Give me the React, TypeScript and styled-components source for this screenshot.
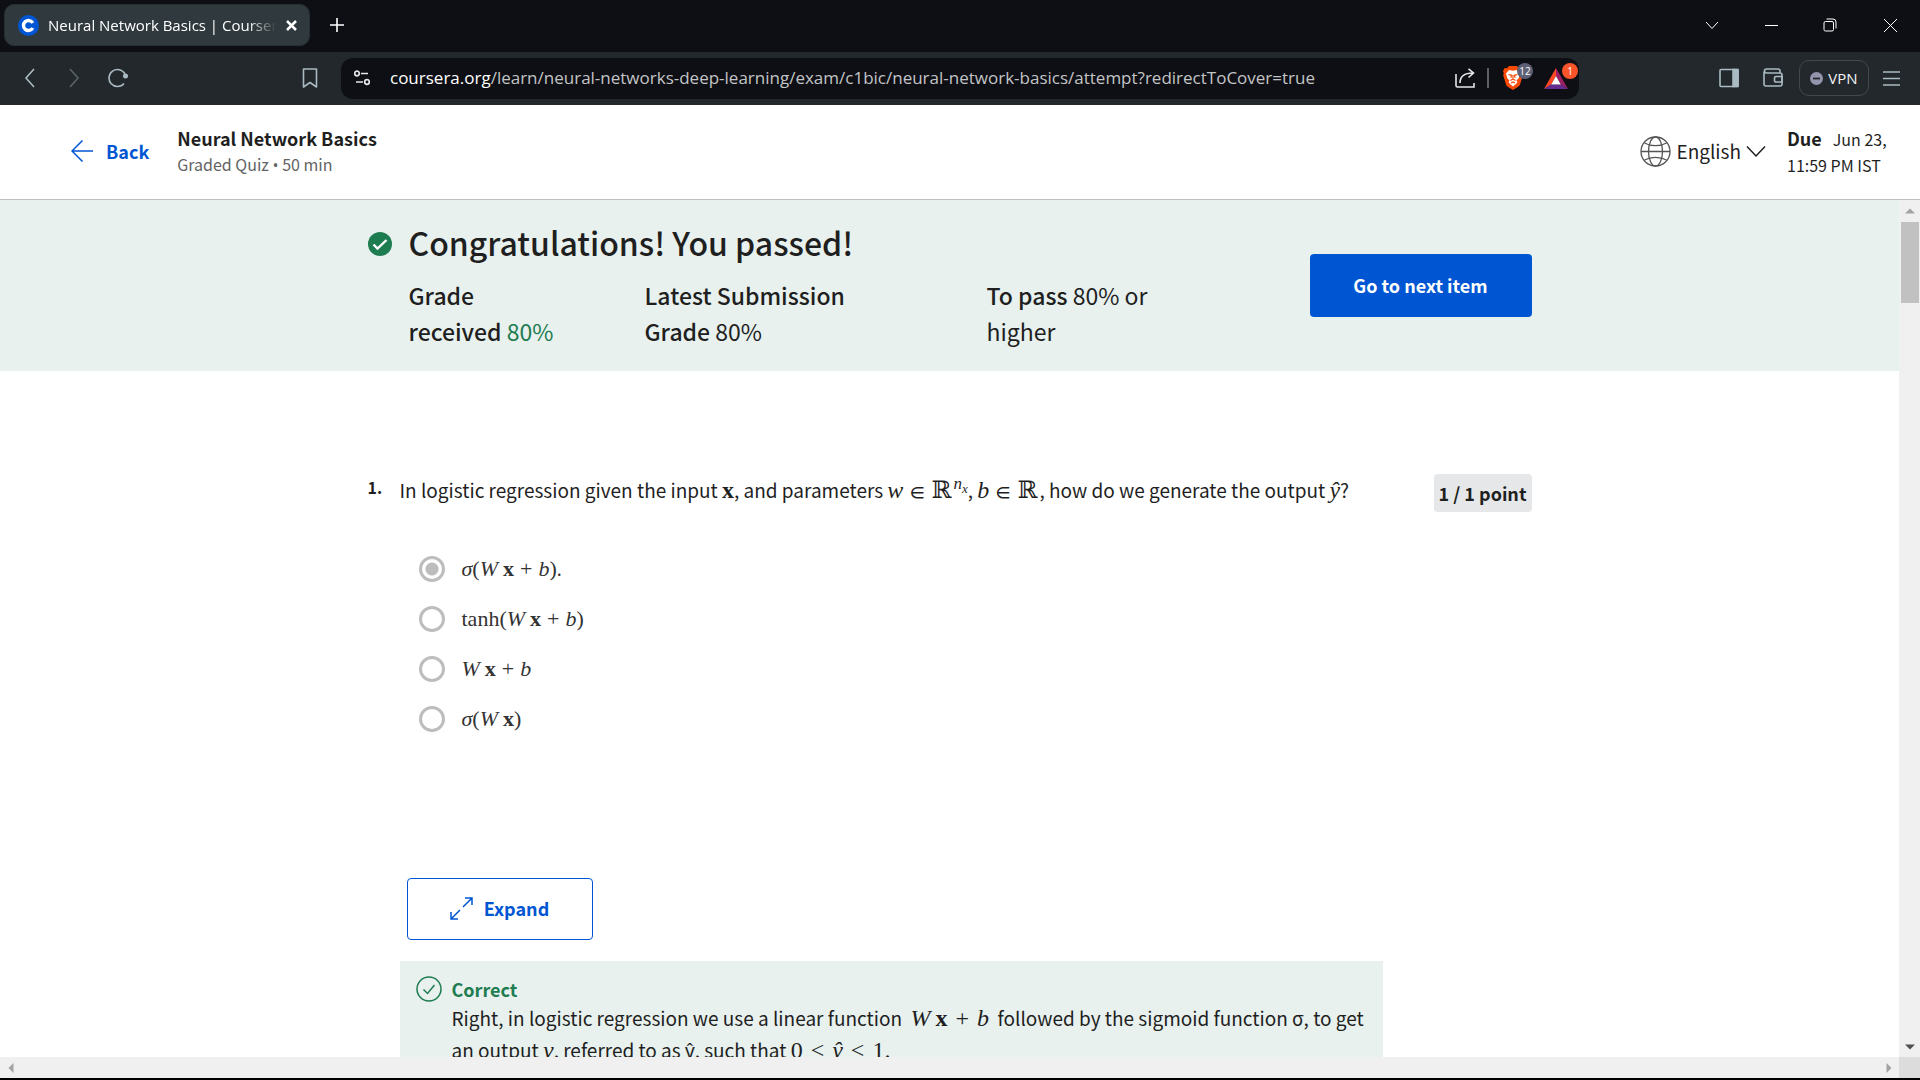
import React from "react";
import styled, { createGlobalStyle } from "styled-components";

const sans = `"Noto Sans CJK SC", "Noto Sans", sans-serif`;
const ui = `"Open Sans", "Noto Sans", sans-serif`;
const serif = `"Liberation Serif", "DejaVu Math TeX Gyre", "DejaVu Serif", serif`;

const Global = createGlobalStyle`
  *, *::before, *::after { box-sizing: border-box; }
  body { margin: 0; background: #000; overflow: hidden; }
  h1, h2, p, fieldset { margin: 0; padding: 0; border: 0; }
  button { font: inherit; color: inherit; background: none; border: 0; padding: 0; cursor: pointer; }
  svg { display: block; flex: none; }
`;

const Window = styled.div`
  height: 100vh;
  display: flex;
  flex-direction: column;
  border-bottom: 2px solid #000;
  background: #fff;
  color: #1f1f1f;
  font-family: ${sans};
  font-size: 18px;
  line-height: 32px;
`;

/* ---------- browser chrome ---------- */

const TabStrip = styled.div`
  flex: none;
  height: 52px;
  display: flex;
  align-items: center;
  padding: 0 0 2px 4px;
  background: #0e0f14;
  color: #fff;
  font-family: ${ui};
`;

const Tab = styled.div`
  width: 306px;
  height: 42px;
  display: flex;
  align-items: center;
  padding: 0 12px 0 13px;
  border: 1px solid #272e32;
  border-radius: 10px;
  background: #30393d;
`;

const TabTitle = styled.span`
  flex: 1;
  min-width: 0;
  margin: 0 10px 0 9px;
  overflow: hidden;
  white-space: nowrap;
  font-size: 15px;
  line-height: 24px;
  -webkit-mask-image: linear-gradient(to right, #000 88%, transparent);
  mask-image: linear-gradient(to right, #000 88%, transparent);
`;

const ChromeButton = styled.button<{ $w?: number; $dim?: boolean }>`
  width: ${(p) => p.$w ?? 36}px;
  height: 36px;
  display: flex;
  flex: none;
  align-items: center;
  justify-content: center;
  opacity: ${(p) => (p.$dim ? 0.4 : 1)};
`;

const WindowControls = styled.div`
  margin-left: auto;
  display: flex;
`;

const Toolbar = styled.div`
  flex: none;
  height: 53px;
  display: flex;
  align-items: center;
  padding: 0 15px 1px 12px;
  background: #23282c;
  color: #a9bac2;
  font-family: ${ui};
`;

const NavGroup = styled.div`
  display: flex;
  gap: 8px;
`;

const BookmarkSlot = styled.div`
  margin-left: 156px;
  margin-right: 13px;
`;

const AddressBar = styled.div`
  flex: 0 1 1238px;
  min-width: 0;
  height: 41px;
  display: flex;
  align-items: center;
  padding: 0 1px 0 3px;
  border-radius: 12px;
  background: #0e0f14;
  color: #e4e6e8;
`;

const Address = styled.span`
  flex: 1;
  min-width: 0;
  margin-left: 10px;
  overflow: hidden;
  white-space: nowrap;
  font-size: 17px;
  line-height: 28px;
  color: #c3c4c6;
`;

const Host = styled.span`
  color: #fff;
`;

const Divider = styled.span`
  width: 2px;
  height: 20px;
  margin: 0 4px;
  background: #5c5e63;
`;

const BadgeButton = styled(ChromeButton)`
  position: relative;
`;

const Badge = styled.span<{ $alert?: boolean }>`
  position: absolute;
  top: 3px;
  right: 0;
  width: 16px;
  height: 16px;
  border-radius: 8px;
  background: ${(p) => (p.$alert ? "#fb542b" : "#5e6175")};
  color: #fff;
  font-size: 10px;
  line-height: 16px;
  text-align: center;
`;

const ToolbarEnd = styled.div`
  margin-left: auto;
  display: flex;
  align-items: center;
  gap: 8px;
`;

const VpnButton = styled.button`
  height: 36px;
  width: 70px;
  display: flex;
  align-items: center;
  justify-content: center;
  gap: 5px;
  border: 1px solid #42494e;
  border-radius: 10px;
  color: #f0f2f4;
  font-size: 15px;
  line-height: 20px;
`;

/* ---------- course header ---------- */

const Header = styled.header`
  flex: none;
  height: 95px;
  display: flex;
  align-items: center;
  padding: 0 32px 2px 71px;
  border-bottom: 1px solid #bdbdbd;
`;

const BackLink = styled.a`
  display: flex;
  align-items: center;
  gap: 13px;
  margin-right: 28px;
  color: #0056d2;
  font-weight: 700;
  line-height: 30px;
  text-decoration: none;
`;

const CourseTitle = styled.h2`
  font-size: 18px;
  font-weight: 700;
  line-height: 26px;
`;

const CourseMeta = styled.p`
  font-size: 16px;
  line-height: 26px;
  color: #636363;
`;

const Bullet = styled.span`
  font-family: ${ui};
`;

const HeaderEnd = styled.div`
  margin-left: auto;
  display: flex;
  align-items: center;
`;

const LanguageButton = styled.button`
  display: flex;
  align-items: center;
  gap: 5px;
  margin-right: 21px;
  font-size: 19px;
`;

const DueDate = styled.p`
  width: 101px;
  white-space: nowrap;
  font-size: 16px;
  line-height: 26px;
`;

const DueLabel = styled.strong`
  margin-right: 11px;
  font-size: 18px;
  font-weight: 700;
`;

/* ---------- scrolling page ---------- */

const Viewport = styled.div`
  flex: 1;
  min-height: 0;
  display: grid;
  grid-template-columns: minmax(0, 1fr) 21px;
  grid-template-rows: minmax(0, 1fr) 21px;
`;

const Page = styled.main`
  overflow: hidden;
`;

const ScrollTrack = styled.div<{ $horizontal?: boolean }>`
  display: flex;
  flex-direction: ${(p) => (p.$horizontal ? "row" : "column")};
  align-items: center;
  justify-content: space-between;
  background: #f0f0f0;
`;

const ScrollArrow = styled.span`
  width: 21px;
  height: 21px;
  display: flex;
  align-items: center;
  justify-content: center;
`;

const ScrollThumb = styled.span`
  width: 18px;
  height: 81px;
  margin: 1px 0 auto;
  background: #c1c1c1;
`;

const ScrollCorner = styled.div`
  background: #dcdcdc;
`;

const Container = styled.div`
  max-width: 1164px;
  margin: 0 auto;
`;

const Banner = styled.section`
  padding: 22px 0;
  background: #e8f1ee;
`;

const BannerRow = styled(Container)`
  display: flex;
  align-items: flex-start;
`;

const BannerIcon = styled.div`
  flex: none;
  width: 41px;
  padding-top: 10px;
`;

const BannerTitle = styled.h1`
  font-size: 32px;
  font-weight: 500;
  line-height: 40px;
`;

const Grades = styled.div`
  display: grid;
  grid-template-columns: 156px 262px 218px;
  column-gap: 80px;
  margin-top: 15px;
  font-size: 23px;
  line-height: 36px;
`;

const Strong = styled.strong`
  font-weight: 500;
`;

const Passed = styled.span`
  color: #1d7c50;
`;

const NextButton = styled.button`
  align-self: center;
  width: 222px;
  height: 63px;
  margin-left: auto;
  padding-bottom: 2px;
  border-radius: 4px;
  background: #0056d2;
  color: #fff;
  font-weight: 700;
`;

const Question = styled(Container)`
  display: grid;
  grid-template-columns: 32px minmax(0, 983px) 1fr;
  align-items: start;
  padding-top: 103px;
`;

const QuestionNumber = styled.span`
  font-weight: 700;
  font-size: 16px;
  line-height: 26px;
`;

const Prose = styled.p`
  font-size: 19px;
`;

const Points = styled.span`
  justify-self: end;
  padding: 0 5px;
  border-radius: 4px;
  background: #e5e7e8;
  font-weight: 700;
  line-height: 38px;
`;

const Options = styled.fieldset`
  padding: 38px 0 0 19px;
`;

const Option = styled.label`
  height: 50px;
  display: flex;
  align-items: center;
  gap: 17px;
  color: #333;
`;

const OptionText = styled.span`
  padding-bottom: 2px;
`;

const Radio = styled.input`
  appearance: none;
  width: 26px;
  height: 26px;
  margin: 0;
  border: 3px solid #bdbdbd;
  border-radius: 50%;
  background: #fff;
  &:checked {
    background: radial-gradient(circle, #bdbdbd 6px, #fff 7px);
  }
`;

const ExpandButton = styled.button`
  width: 186px;
  height: 62px;
  display: flex;
  align-items: center;
  justify-content: center;
  gap: 11px;
  margin: 134px 0 21px 7px;
  padding-bottom: 2px;
  border: 1px solid #0056d2;
  border-radius: 4px;
  color: #0056d2;
  font-weight: 700;
`;

const Feedback = styled.section`
  display: flex;
  gap: 10px;
  padding: 15px 16px 24px;
  background: #e8f1ee;
`;

const FeedbackIcon = styled.div`
  color: #1d7c50;
`;

const FeedbackTitle = styled.h2`
  font-size: 18px;
  font-weight: 700;
  line-height: 26px;
  color: #1d7c50;
`;

/* ---------- inline formulas ---------- */

const Formula = styled.span<{ $small?: boolean }>`
  font-family: ${serif};
  font-size: ${(p) => (p.$small ? 22 : 24)}px;
  line-height: 1;
  white-space: nowrap;
`;

const Sup = styled.sup`
  font-size: 17px;
  line-height: 0;
`;

const Sub = styled.sub`
  font-size: 13px;
  line-height: 0;
`;

const Op = styled.span<{ $gap?: number }>`
  margin: 0 ${(p) => p.$gap ?? 6}px;
`;

const Member = styled.span`
  margin: 0 6px;
  font-size: 19px;
`;

const Bold = styled.b`
  margin-left: 5px;
`;

const Wxb = ({ gap }: { gap?: number }) => (
  <>
    <i>W</i>
    <Bold>x</Bold>
    <Op $gap={gap}>+</Op>
    <i>b</i>
  </>
);

/* ---------- icons ---------- */

type StrokeProps = { size: number; w?: number; children: React.ReactNode };
const Stroke = ({ size, w = 2, children }: StrokeProps) => (
  <svg width={size} height={size} viewBox={`0 0 ${size} ${size}`} fill="none" stroke="currentColor" strokeWidth={w} aria-hidden="true">
    {children}
  </svg>
);

const Favicon = () => (
  <svg width="21" height="21" viewBox="0 0 21 21" aria-hidden="true">
    <circle cx="10.500" cy="10.500" r="10.500" fill="#0056d2" />
    <path d="M14.800 8A5 5 0 1 0 14.800 13" fill="none" stroke="#fff" strokeWidth="3.400" />
  </svg>
);

const BraveLion = () => (
  <svg width="20" height="24" viewBox="0 0 20 24" aria-hidden="true">
    <path d="M6 0h8l2 2.200 2.300-.2L20 5l-.8 2.200.6 2L17 18.500c-.6 1.800-2.500 2.900-7 5.500-4.500-2.600-6.400-3.700-7-5.500L.2 9.200l.6-2L0 5l1.700-3 2.300.2z" fill="#fb4a04" />
    <path d="M6 4l4 .8L14 4l3 3.600-1.300 4.600-2.200 2.300 1 1.500-1.500 2L10 20.500 7 18l-1.500-2 1-1.500-2.200-2.300L3 7.600z" fill="#fff" />
    <path d="M5.500 8.500l3 .8-.6 2.500M14.500 8.500l-3 .8.6 2.500M7.500 14.500L10 13l2.500 1.500M10 9v4M8 17l2-1 2 1" fill="none" stroke="#fb4a04" strokeWidth="1.200" />
  </svg>
);

const BatTriangle = () => (
  <svg width="24" height="21" viewBox="0 0 24 21" aria-hidden="true">
    <path d="M12 0L0 21l7.200-4.600L12 8z" fill="#ff4724" />
    <path d="M12 0v8l4.800 8.400L24 21z" fill="#9e1f63" />
    <path d="M0 21h24l-7.200-4.600H7.200z" fill="#662d91" />
    <path d="M12 8l4.800 8.400H7.200z" fill="#fff" />
  </svg>
);

const Globe = () => (
  <svg width="31" height="31" viewBox="0 0 31 31" fill="none" stroke="#555" strokeWidth="1.300" aria-hidden="true">
    <circle cx="15.500" cy="15.500" r="14.500" />
    <ellipse cx="15.500" cy="15.500" rx="7" ry="14.500" />
    <path d="M1 15.500h29M4.500 7c6 3.500 16 3.500 22 0M4.500 24c6-3.500 16-3.500 22 0" />
  </svg>
);

const Arrow = ({ turn, dark }: { turn: number; dark?: boolean }) => (
  <svg width="10" height="10" viewBox="0 0 10 10" aria-hidden="true">
    <path d="M0 7.500h10L5 2.500z" fill={dark ? "#505050" : "#a3a3a3"} transform={`rotate(${turn} 5 5)`} />
  </svg>
);

/* ---------- content ---------- */

const options: { id: string; formula: React.ReactNode; tail?: string }[] = [
  { id: "a", formula: <><i>σ</i>(<Wxb />)</>, tail: "." },
  { id: "b", formula: <>tanh(<Wxb />)</> },
  { id: "c", formula: <Wxb /> },
  { id: "d", formula: <><i>σ</i>(<i>W</i><Bold>x</Bold>)</> },
];

const BrowserTabs = () => (
  <TabStrip>
    <Tab>
      <Favicon />
      <TabTitle>Neural Network Basics | Coursera</TabTitle>
      <button aria-label="Close tab">
        <Stroke size={11} w={2.500}><path d="M1 1l9 9M10 1l-9 9" /></Stroke>
      </button>
    </Tab>
    <ChromeButton $w={54} aria-label="New tab">
      <Stroke size={14} w={1.600}><path d="M7 0v14M0 7h14" /></Stroke>
    </ChromeButton>
    <WindowControls>
      <ChromeButton $w={60} aria-label="Search tabs">
        <Stroke size={14} w={1}><path d="M1 4l6 6.500L13 4" /></Stroke>
      </ChromeButton>
      <ChromeButton $w={58} aria-label="Minimize">
        <Stroke size={13} w={1}><path d="M0 6.500h13" /></Stroke>
      </ChromeButton>
      <ChromeButton $w={60} aria-label="Restore">
        <Stroke size={14} w={1}>
          <rect x="1" y="3.500" width="9.500" height="9.500" rx="1.500" />
          <path d="M3.500 1h6.500a3 3 0 0 1 3 3v6.500" />
        </Stroke>
      </ChromeButton>
      <ChromeButton $w={60} aria-label="Close">
        <Stroke size={13} w={1}><path d="M0 0l13 13M13 0L0 13" /></Stroke>
      </ChromeButton>
    </WindowControls>
  </TabStrip>
);

const BrowserToolbar = () => (
  <Toolbar>
    <NavGroup>
      <ChromeButton aria-label="Back">
        <Stroke size={20} w={1.600}><path d="M14 1L6 10l8 9" /></Stroke>
      </ChromeButton>
      <ChromeButton $dim aria-label="Forward">
        <Stroke size={20} w={1.600}><path d="M6 1l8 9-8 9" /></Stroke>
      </ChromeButton>
      <ChromeButton aria-label="Reload">
        <Stroke size={20} w={1.600}>
          <path d="M16 15.500A8.500 8.500 0 1 1 17 6" />
          <circle cx="17.500" cy="8" r="2.500" fill="currentColor" stroke="none" />
        </Stroke>
      </ChromeButton>
    </NavGroup>
    <BookmarkSlot>
      <ChromeButton aria-label="Bookmark this page">
        <Stroke size={20} w={1.600}><path d="M3.500 1h13v18L10 14.500 3.500 19z" strokeLinejoin="round" /></Stroke>
      </ChromeButton>
    </BookmarkSlot>
    <AddressBar>
      <ChromeButton aria-label="Site information">
        <Stroke size={16} w={1.700}>
          <circle cx="3" cy="3.500" r="2.300" />
          <path d="M7 3.500h7M2 12h7" />
          <circle cx="13" cy="12" r="2.300" />
        </Stroke>
      </ChromeButton>
      <Address>
        <Host>coursera.org</Host>/learn/neural-networks-deep-learning/exam/c1bic/neural-network-basics/attempt?redirectToCover=true
      </Address>
      <ChromeButton aria-label="Share">
        <Stroke size={20} w={1.600}>
          <path d="M1 6v11.500a1.500 1.500 0 0 0 1.500 1.500H19v-4" />
          <path d="M5 15c0-6 4-10 13-10M13.500 .8L18.500 5l-5 4.500" />
        </Stroke>
      </ChromeButton>
      <Divider />
      <BadgeButton $w={40} aria-label="Brave Shields">
        <BraveLion />
        <Badge>12</Badge>
      </BadgeButton>
      <BadgeButton $w={45} aria-label="Brave Rewards">
        <BatTriangle />
        <Badge $alert>1</Badge>
      </BadgeButton>
    </AddressBar>
    <ToolbarEnd>
      <ChromeButton aria-label="Sidebar">
        <Stroke size={20} w={1.600}>
          <rect x="1" y="1.500" width="18" height="17" rx="1" />
          <path d="M14 1.500h5v17h-5z" fill="currentColor" />
        </Stroke>
      </ChromeButton>
      <ChromeButton aria-label="Wallet">
        <Stroke size={20} w={1.600}>
          <path d="M1 3.500v12.500a2 2 0 0 0 2 2h14a2 2 0 0 0 2-2V7a2 2 0 0 0-2-2H3.500a2 2 0 0 1 0-4H15a2 2 0 0 1 2 2v2" />
          <path d="M19 8.500h-6a1.500 1.500 0 0 0-1.500 1.500v2.500A1.500 1.500 0 0 0 13 14h6z" />
        </Stroke>
      </ChromeButton>
      <VpnButton>
        <svg width="13" height="13" viewBox="0 0 13 13" aria-hidden="true">
          <circle cx="6.500" cy="6.500" r="6.500" fill="#9495ad" />
          <path d="M3 6.500h7" stroke="#23282c" strokeWidth="1.800" />
        </svg>
        VPN
      </VpnButton>
      <ChromeButton aria-label="Menu" $w={28}>
        <Stroke size={17} w={1.600}><path d="M0 2h17M0 8.500h17M0 15h17" /></Stroke>
      </ChromeButton>
    </ToolbarEnd>
  </Toolbar>
);

const CourseHeader = () => (
  <Header>
    <BackLink href="#back">
      <Stroke size={22} w={1.500}><path d="M22 11H1.500M11.500 .5L1 11l10.500 10.500" /></Stroke>
      Back
    </BackLink>
    <div>
      <CourseTitle>Neural Network Basics</CourseTitle>
      <CourseMeta>Graded Quiz <Bullet>•</Bullet> 50 min</CourseMeta>
    </div>
    <HeaderEnd>
      <LanguageButton>
        <Globe />
        English
        <Stroke size={20} w={1.500}><path d="M1 5.500l9 9.500 9-9.500" /></Stroke>
      </LanguageButton>
      <DueDate>
        <DueLabel>Due</DueLabel>Jun 23,
        <br />
        11:59 PM IST
      </DueDate>
    </HeaderEnd>
  </Header>
);

const ResultBanner = () => (
  <Banner>
    <BannerRow>
      <BannerIcon>
        <svg width="24" height="24" viewBox="0 0 24 24" aria-hidden="true">
          <circle cx="12" cy="12" r="12" fill="#1d7c50" />
          <path d="M5.500 12.500l4 4L18.500 8" fill="none" stroke="#fff" strokeWidth="2.400" />
        </svg>
      </BannerIcon>
      <div>
        <BannerTitle>Congratulations! You passed!</BannerTitle>
        <Grades>
          <span><Strong>Grade received</Strong> <Passed>80%</Passed></span>
          <span><Strong>Latest Submission Grade</Strong> 80%</span>
          <span><Strong>To pass</Strong> 80% or higher</span>
        </Grades>
      </div>
      <NextButton>Go to next item</NextButton>
    </BannerRow>
  </Banner>
);

const QuizQuestion = () => (
  <Question>
    <QuestionNumber>1.</QuestionNumber>
    <div>
      <Prose id="question">
        In logistic regression given the input <Formula><b>x</b></Formula>, and parameters{" "}
        <Formula>
          <i>w</i><Member>∈</Member>ℝ<Sup><i>n</i><Sub><i>x</i></Sub></Sup>
        </Formula>
        , <Formula><i>b</i><Member>∈</Member>ℝ</Formula>, how do we generate the output <Formula><i>ŷ</i></Formula>?
      </Prose>
      <Options aria-labelledby="question">
        {options.map((o, i) => (
          <Option key={o.id}>
            <Radio type="radio" name="answer" defaultChecked={i === 0} />
            <OptionText><Formula $small>{o.formula}</Formula>{o.tail}</OptionText>
          </Option>
        ))}
      </Options>
      <ExpandButton>
        <Stroke size={23} w={1.500}>
          <path d="M13 10L22 1M15 1h7v7M10 13l-9 9M1 15v7h7" />
        </Stroke>
        Expand
      </ExpandButton>
      <Feedback>
        <FeedbackIcon>
          <Stroke size={26} w={1.500}>
            <circle cx="13" cy="13" r="12" />
            <path d="M7.500 13.500l4 4 7-8.500" />
          </Stroke>
        </FeedbackIcon>
        <div>
          <FeedbackTitle>Correct</FeedbackTitle>
          <Prose>
            Right, in logistic regression we use a linear function&nbsp; <Formula><Wxb gap={8} /></Formula>&nbsp; followed by the
            sigmoid function σ, to get an output <Formula><i>y</i></Formula>, referred to as ŷ, such that{" "}
            <Formula>0<Op $gap={8}>&lt;</Op><i>ŷ</i><Op $gap={8}>&lt;</Op>1.</Formula>
          </Prose>
        </div>
      </Feedback>
    </div>
    <Points>1 / 1 point</Points>
  </Question>
);

export default function App() {
  return (
    <Window>
      <Global />
      <BrowserTabs />
      <BrowserToolbar />
      <CourseHeader />
      <Viewport>
        <Page>
          <ResultBanner />
          <QuizQuestion />
        </Page>
        <ScrollTrack>
          <ScrollArrow><Arrow turn={0} /></ScrollArrow>
          <ScrollThumb />
          <ScrollArrow><Arrow turn={180} dark /></ScrollArrow>
        </ScrollTrack>
        <ScrollTrack $horizontal>
          <ScrollArrow><Arrow turn={-90} /></ScrollArrow>
          <ScrollArrow><Arrow turn={90} /></ScrollArrow>
        </ScrollTrack>
        <ScrollCorner />
      </Viewport>
    </Window>
  );
}
